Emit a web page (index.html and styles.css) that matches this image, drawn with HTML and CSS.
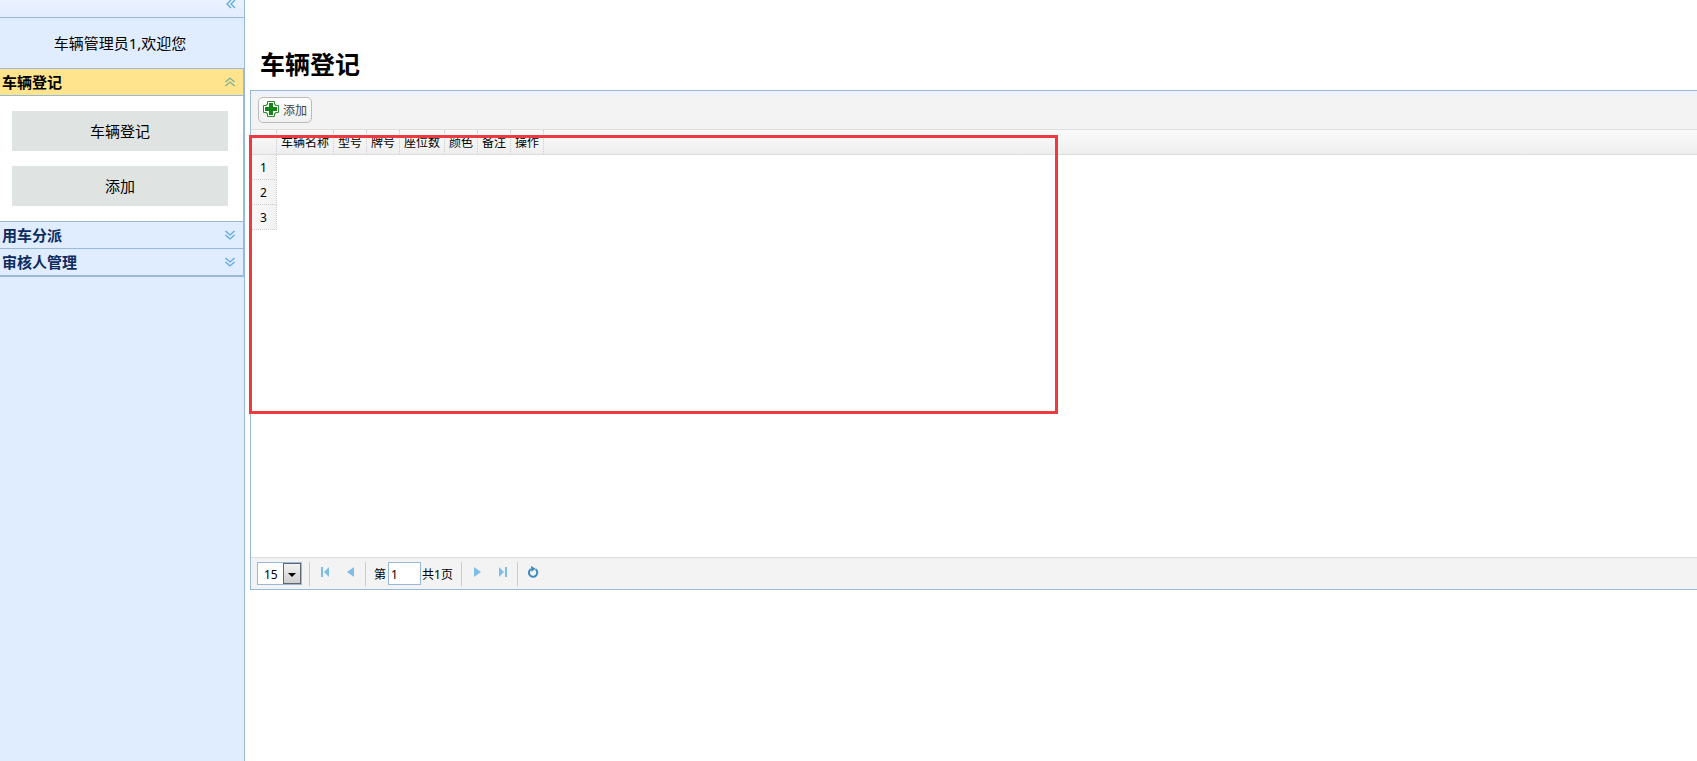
FILE: index.html
```html
<!DOCTYPE html>
<html lang="zh-CN">
<head>
  <meta charset="UTF-8">
  <title>车辆登记</title>
  <link rel="stylesheet" href="styles.css">
</head>
<body>
  <!-- 左侧菜单 -->
  <div class="sidebar">
    <div class="sidebar-header">
      <svg class="arrow" width="10" height="10" viewBox="0 0 10 10"><path d="M5 0L1 4l4 4M9 0L5 4l4 4"/></svg>
    </div>
    <div class="welcome">车辆管理员1,欢迎您</div>
    <div class="accordion">
      <div class="accordion-header selected">
        <span>车辆登记</span>
        <svg class="arrow" width="10" height="10" viewBox="0 0 10 10"><path d="M.5 5L5 1l4.500 4M.5 9L5 5l4.500 4"/></svg>
      </div>
      <div class="accordion-body">
        <a class="menu-btn">车辆登记</a>
        <a class="menu-btn">添加</a>
      </div>
      <div class="accordion-header">
        <span>用车分派</span>
        <svg class="arrow" width="10" height="10" viewBox="0 0 10 10"><path d="M.5 1L5 5l4.500-4M.5 5L5 9l4.500-4"/></svg>
      </div>
      <div class="accordion-header">
        <span>审核人管理</span>
        <svg class="arrow" width="10" height="10" viewBox="0 0 10 10"><path d="M.5 1L5 5l4.500-4M.5 5L5 9l4.500-4"/></svg>
      </div>
    </div>
  </div>

  <!-- 内容 -->
  <div class="main">
    <h1>车辆登记</h1>
    <div class="datagrid">
      <div class="toolbar">
        <a class="add-btn">
          <svg width="16" height="16" viewBox="0 0 16 16">
            <path d="M4.500.5h7v3h1v1h3v7h-3v1h-1v3h-7v-3h-1v-1h-3v-7h3v-1h1z" fill="#fff" stroke="#2a8a2a"/>
            <path d="M6 2h4v4h4v4h-4v4H6v-4H2V6h4z" fill="#14831a"/>
          </svg>
          <span>添加</span>
        </a>
      </div>
      <div class="grid-head">
        <div class="cell rownum"></div>
        <div class="cell">车辆名称</div>
        <div class="cell">型号</div>
        <div class="cell">牌号</div>
        <div class="cell">座位数</div>
        <div class="cell">颜色</div>
        <div class="cell">备注</div>
        <div class="cell">操作</div>
      </div>
      <div class="grid-body">
        <div class="num">1</div>
        <div class="num">2</div>
        <div class="num">3</div>
      </div>
      <div class="pager">
        <div class="page-size"><span>15</span><i></i></div>
        <b class="sep"></b>
        <svg class="first" width="10" height="10" viewBox="0 0 10 10"><path d="M1 0h2v10H1zM9 0v10L4 5z"/></svg>
        <svg class="prev" width="7" height="10" viewBox="0 0 7 10"><path d="M7 0v10L0 5z"/></svg>
        <b class="sep"></b>
        <span class="page-label">第</span>
        <input class="page-num" type="text" value="1">
        <span class="page-total">共1页</span>
        <b class="sep"></b>
        <svg class="next" width="7" height="10" viewBox="0 0 7 10"><path d="M0 0v10l7-5z"/></svg>
        <svg class="last" width="10" height="10" viewBox="0 0 10 10"><path d="M7 0h2v10H7zM1 0v10l5-5z"/></svg>
        <b class="sep"></b>
        <svg class="reload" width="12" height="13" viewBox="0 0 12 13">
          <path d="M8.500 3.200A4.200 4.200 0 1 1 4 3" fill="none" stroke="#3b8bbd" stroke-width="2"/>
          <path d="M4 0l4.500 2.500L4.500 6z" fill="#3b8bbd"/>
        </svg>
      </div>
    </div>
  </div>

  <div class="mark"></div>
</body>
</html>
```

FILE: styles.css
```css
* {
  box-sizing: border-box;
}

body {
  margin: 0;
  height: 761px;
  display: flex;
  overflow: hidden;
  background: #fff;
  color: #000;
  font-family: "Noto Sans", "Noto Sans CJK SC", sans-serif;
  font-size: 12px;
}

svg {
  display: block;
  flex: none;
}

/* 左侧菜单 */
.sidebar {
  width: 245px;
  flex: none;
  background: #e0ecff;
  border-right: 1px solid #98b8dc;
}

.sidebar-header {
  height: 18px;
  padding: 0 8px 0 0;
  display: flex;
  justify-content: flex-end;
  background: linear-gradient(#eaf2ff, #e3edff);
  border-bottom: 1px solid #98b8dc;
}

.arrow {
  fill: none;
  stroke: #5fa9dc;
  stroke-width: 1.3;
}

.welcome {
  height: 50px;
  padding-right: 4px;
  line-height: 50px;
  text-align: center;
  font-size: 15px;
}

.accordion {
  border: 1px solid #98b8dc;
  border-left: 0;
}

.accordion-header {
  height: 27px;
  padding: 0 8px 0 2px;
  display: flex;
  align-items: center;
  justify-content: space-between;
  border-bottom: 1px solid #98b8dc;
  color: #0e2d5f;
  font-size: 15px;
  font-weight: bold;
  line-height: 26px;
}

.accordion-header.selected {
  background: #ffe48d;
  color: #000;
}

.selected .arrow {
  stroke: #7fae93;
}

.accordion-body {
  height: 126px;
  padding: 15px 15px 0 12px;
  background: #fff;
  border-bottom: 1px solid #98b8dc;
}

.menu-btn {
  display: block;
  height: 40px;
  margin-bottom: 15px;
  background: #dfe3e2;
  font-size: 15px;
  line-height: 40px;
  text-align: center;
}

/* 内容 */
.main {
  flex: 1;
  padding-left: 5px;
}

h1 {
  height: 90px;
  margin: 0;
  padding: 46px 0 0 10px;
  font-size: 25px;
  line-height: 36px;
}

.datagrid {
  height: 500px;
  display: flex;
  flex-direction: column;
  border: 1px solid #98b8dc;
  border-right: 0;
}

.toolbar {
  height: 39px;
  padding: 6px 7px;
  background: linear-gradient(#edf2fc 0, #edf2fc 4px, #f3f3f3 5px);
  border-bottom: 1px solid #ddd;
}

.add-btn {
  width: 54px;
  height: 26px;
  padding: 0 4px;
  display: flex;
  justify-content: space-between;
  border: 1px solid #bbb;
  border-radius: 5px;
  background: linear-gradient(#fff, #f0f0f0);
  color: #444;
  line-height: 26px;
}

.add-btn svg {
  margin-top: 3px;
}

.grid-head {
  height: 25px;
  display: flex;
  background: linear-gradient(#fbfbfb, #eee);
  border-bottom: 1px solid #ddd;
}

.cell {
  padding: 0 4px;
  border-right: 1px dotted #ccc;
  line-height: 25px;
}

.cell.rownum {
  width: 26px;
}

.grid-body {
  flex: 1;
}

.num {
  width: 26px;
  height: 25px;
  border-right: 1px dotted #ccc;
  border-bottom: 1px dotted #ccc;
  background: linear-gradient(90deg, #fafafa, #f1f1f1);
  line-height: 25px;
  text-align: center;
}

.pager {
  height: 32px;
  padding-left: 6px;
  display: flex;
  align-items: center;
  background: #f3f3f3;
  border-top: 1px solid #ddd;
}

.pager path {
  fill: #80bde6;
}

.page-size {
  width: 45px;
  height: 23px;
  display: flex;
  border: 1px solid #98b8dc;
  background: #fff;
}

.page-size span {
  flex: 1;
  padding-left: 6px;
  line-height: 24px;
}

.page-size i {
  width: 18px;
  border: 1px solid #5f6773;
  background: linear-gradient(#f3f3f3, #cfcfcf);
}

.page-size i::before {
  content: "";
  display: block;
  margin: 9px auto 0 4px;
  width: 0;
  border: 4px solid transparent;
  border-top-color: #000;
  border-bottom: 0;
}

.sep {
  width: 1px;
  height: 24px;
  background: #ccc;
}

.page-size + .sep {
  margin-left: 7px;
}

.pager .first {
  margin: -3px 17px 0 10px;
}

.pager .prev {
  margin: -3px 11px 0 0;
}

.page-label {
  margin-left: 8px;
}

.page-num {
  width: 33px;
  height: 23px;
  margin: 0 1px 0 2px;
  padding: 1px 2px 0;
  border: 1px solid #98b8dc;
  background: #fff;
  font: inherit;
}

.page-total {
  margin-right: 8px;
}

.pager .next {
  margin: -3px 18px 0 12px;
}

.pager .last {
  margin: -3px 9px 0 -1px;
}

.pager .reload {
  margin: -3px 0 0 9px;
}

.reload path:first-child {
  fill: none;
}

.reload path:last-child {
  fill: #3b8bbd;
}

/* 红色标记框 */
.mark {
  position: absolute;
  left: 249px;
  top: 135px;
  width: 809px;
  height: 279px;
  border: 3px solid #ee3a3e;
}
```
